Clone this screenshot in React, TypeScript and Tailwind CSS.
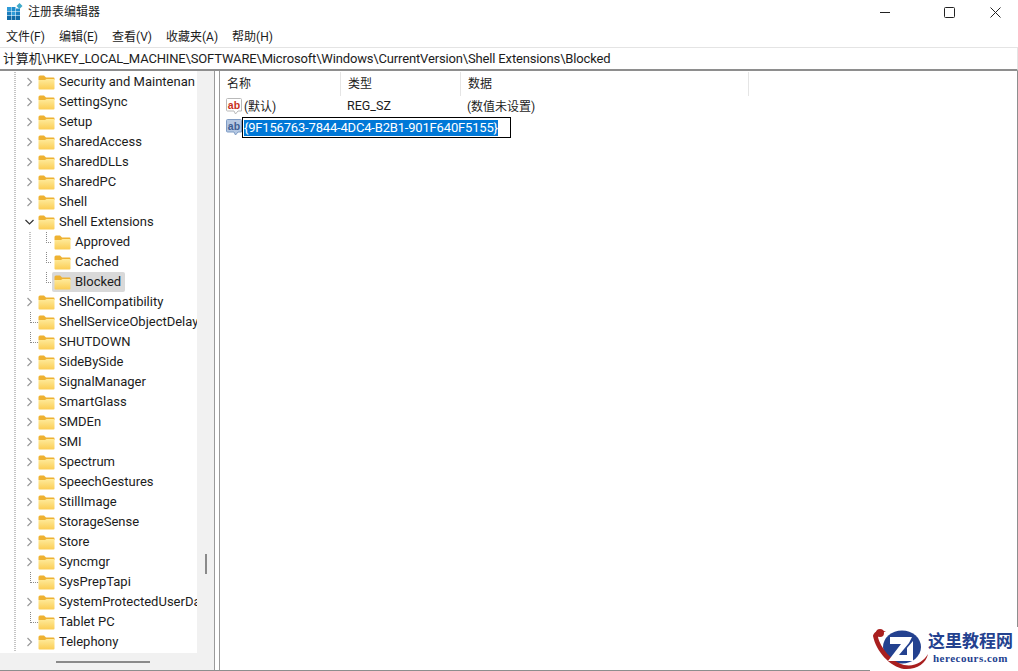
const rows = [
  { name: 'Security and Maintenan', kids: true },
  { name: 'SettingSync', kids: true },
  { name: 'Setup', kids: true },
  { name: 'SharedAccess', kids: true },
  { name: 'SharedDLLs', kids: true },
  { name: 'SharedPC', kids: true },
  { name: 'Shell', kids: true },
  { name: 'Shell Extensions', kids: true, open: true },
  { name: 'Approved', child: true },
  { name: 'Cached', child: true },
  { name: 'Blocked', child: true, selected: true },
  { name: 'ShellCompatibility', kids: true },
  { name: 'ShellServiceObjectDelay', kids: false },
  { name: 'SHUTDOWN', kids: false },
  { name: 'SideBySide', kids: true },
  { name: 'SignalManager', kids: true },
  { name: 'SmartGlass', kids: true },
  { name: 'SMDEn', kids: true },
  { name: 'SMI', kids: true },
  { name: 'Spectrum', kids: true },
  { name: 'SpeechGestures', kids: true },
  { name: 'StillImage', kids: true },
  { name: 'StorageSense', kids: true },
  { name: 'Store', kids: true },
  { name: 'Syncmgr', kids: true },
  { name: 'SysPrepTapi', kids: false },
  { name: 'SystemProtectedUserDa', kids: true },
  { name: 'Tablet PC', kids: false },
  { name: 'Telephony', kids: true },
]

const menus = ['文件(F)', '编辑(E)', '查看(V)', '收藏夹(A)', '帮助(H)']
const columns = [
  { label: '名称', width: 'w-[121px]' },
  { label: '类型', width: 'w-[120px]' },
  { label: '数据', width: 'w-[288px]' },
]

function AppIcon() {
  return (
    <svg width="16" height="17" viewBox="0 0 16 17" className="shrink-0">
      <rect x="0" y="4" width="4" height="4" fill="#2f9bd8" />
      <rect x="4.5" y="4" width="4" height="4" fill="#1f8ccb" />
      <rect x="9" y="5.5" width="4" height="2.5" fill="#1f8ccb" />
      <rect x="0" y="8.5" width="4" height="4" fill="#1a7fbf" />
      <rect x="4.5" y="8.5" width="4" height="4" fill="#2f9bd8" />
      <rect x="9" y="8.5" width="4" height="4" fill="#1a7fbf" />
      <rect x="0" y="13" width="4" height="4" fill="#0f6aa6" />
      <rect x="4.5" y="13" width="4" height="4" fill="#0f6aa6" />
      <rect x="9" y="13" width="4" height="4" fill="#0f6aa6" />
      <path d="M12.5 0 L15.5 3 L12.5 6 L9.5 3 Z" fill="#3fa9c9" />
    </svg>
  )
}

function Folder() {
  return (
    <svg width="17" height="15" viewBox="0 0 17 15" className="shrink-0">
      <defs>
        <linearGradient id="folderFill" x1="0" y1="0" x2="0" y2="1">
          <stop offset="0" stopColor="#ffeb9c" />
          <stop offset="1" stopColor="#fbcd55" />
        </linearGradient>
      </defs>
      <path d="M0.5 2 Q0.5 0.5 2 0.5 H6 L8 2.5 H15.5 Q16.5 2.5 16.5 3.5 V5 H0.5 Z" fill="#eeb232" />
      <path d="M0.5 5 L7 5 L8.5 4 H15.5 Q16.5 4 16.5 5 V13.5 Q16.5 14.5 15.5 14.5 H1.5 Q0.5 14.5 0.5 13.5 Z" fill="url(#folderFill)" />
    </svg>
  )
}

function Guides({ kids, open, child }: { kids?: boolean; open?: boolean; child?: boolean }) {
  const w = child ? 52 : 38
  return (
    <svg width={w} height="20" viewBox={`0 0 ${w} 20`} className="shrink-0">
      <line x1="15" y1="0" x2="15" y2="20" stroke="#8a8a8a" strokeDasharray="1 1" />
      {child ? (
        <>
          <line x1="30" y1="0" x2="30" y2="20" stroke="#8a8a8a" strokeDasharray="1 1" />
          <line x1="46.5" y1="0" x2="46.5" y2="10" stroke="#8a8a8a" strokeDasharray="1 1" />
          <line x1="46" y1="10.5" x2="52" y2="10.5" stroke="#8a8a8a" strokeDasharray="1 1" />
        </>
      ) : kids ? (
        open ? (
          <path d="M25.5 8 L29.5 12 L33.5 8" fill="none" stroke="#333" strokeWidth="1.2" />
        ) : (
          <path d="M27.5 6 L31.5 10 L27.5 14" fill="none" stroke="#9a9a9a" strokeWidth="1.2" />
        )
      ) : (
        <>
          <line x1="30.5" y1="0" x2="30.5" y2="11" stroke="#8a8a8a" strokeDasharray="1 1" />
          <line x1="31" y1="10.5" x2="38" y2="10.5" stroke="#8a8a8a" strokeDasharray="1 1" />
        </>
      )}
    </svg>
  )
}

function ValueIcon({ dim }: { dim?: boolean }) {
  return (
    <svg width="16" height="17" viewBox="0 0 16 17" className="shrink-0">
      <path
        d="M0.5 1.5 Q0.5 0.5 1.5 0.5 H14.5 Q15.5 0.5 15.5 1.5 V13 L12 13 L9.5 16 L8 13 H1.5 Q0.5 13 0.5 12 Z"
        fill={dim ? '#b4c7e2' : '#fff'}
        stroke={dim ? '#7f9cc5' : '#b9b9b9'}
      />
      <text
        x="8"
        y="10.5"
        textAnchor="middle"
        fontSize="10.5"
        fontWeight="700"
        fontFamily="Liberation Sans"
        fill={dim ? '#3f5f95' : '#c8321e'}
      >
        ab
      </text>
    </svg>
  )
}

function Logo() {
  return (
    <svg width="60" height="43" viewBox="0 0 60 43" className="-mr-[2px] shrink-0">
      <ellipse cx="32" cy="20" rx="19" ry="16.5" fill="#23418f" />
      <path d="M3 9 C4 4 10 2 16 5 C12 5 8 7 8 10 C10 20 22 35 34 38 C45 40 53 35 58 27 C56 37 46 43 34 42 C20 40 6 24 3 9 Z" fill="#a81f1f" />
      <circle cx="10" cy="6" r="4" fill="#a81f1f" />
      <path d="M20 10 H42 L39 16 L29 28 H37 V21 L43 14 V34 H18 L31 17 H20 Z" fill="#fff" />
    </svg>
  )
}

export default function App() {
  return (
    <div className="relative flex h-[671px] w-[1018px] flex-col overflow-hidden bg-white font-['Roboto','Noto_Sans_CJK_SC',sans-serif] text-[13px] text-[#1c1c1c]">
      <div className="flex h-[27px] shrink-0 items-start">
        <div className="flex items-center gap-[5px] pl-[7px] pt-[3px]">
          <AppIcon />
          <span className="text-[12px] leading-[16px]">注册表编辑器</span>
        </div>
        <div className="ml-auto flex items-center">
          <div className="flex h-[24px] w-[46px] items-center justify-center">
            <svg width="46" height="22" viewBox="0 0 46 22"><line x1="0" y1="11.5" x2="10" y2="11.5" stroke="#222" /></svg>
          </div>
          <div className="flex h-[24px] w-[46px] items-center justify-center">
            <svg width="11" height="11" viewBox="0 0 11 11"><rect x="0.5" y="0.5" width="10" height="10" rx="1" fill="none" stroke="#222" /></svg>
          </div>
          <div className="flex h-[24px] w-[46px] items-center justify-center">
            <svg width="11" height="11" viewBox="0 0 11 11"><path d="M0.5 0.5 L10.5 10.5 M10.5 0.5 L0.5 10.5" fill="none" stroke="#222" /></svg>
          </div>
        </div>
      </div>

      <div className="flex h-[20px] shrink-0 items-center gap-[14px] pl-[6px] text-[12px]">
        {menus.map((m) => (
          <span key={m}>{m}</span>
        ))}
      </div>

      <div className="flex h-[24px] shrink-0 items-center border-t border-r border-[#e4e4e4] border-b-[2px] border-b-[#8e8e8e] pl-[3px] text-[13px] tracking-[-0.155px]">
        计算机\HKEY_LOCAL_MACHINE\SOFTWARE\Microsoft\Windows\CurrentVersion\Shell Extensions\Blocked
      </div>

      <div className="flex min-h-0 flex-1 border-r border-b border-[#8e8e8e]">
        <div className="flex w-[215px] shrink-0 flex-col border-r border-[#9a9a9a]">
          <div className="flex min-h-0 flex-1">
            <div className="min-w-0 flex-1 overflow-hidden pt-[1px]">
              {rows.map((r) => (
                <div key={r.name} className="flex h-[20px] items-center whitespace-nowrap">
                  <Guides kids={r.kids} open={r.open} child={r.child} />
                  <div className={`flex h-[20px] items-center gap-[4px] pr-[4px] ${r.child ? 'pl-[2px]' : ''} ${r.selected ? 'rounded-[2px] bg-[#d9d9d9]' : ''}`}>
                    <Folder />
                    <span className="leading-[20px]">{r.name}</span>
                  </div>
                </div>
              ))}
            </div>
            <div className="flex w-[17px] shrink-0 justify-center bg-[#f1f1f1] pt-[483px]">
              <div className="h-[20px] w-[2px] bg-[#8a8a8a]" />
            </div>
          </div>
          <div className="flex h-[17px] shrink-0 items-center bg-[#f1f1f1] pl-[56px]">
            <div className="h-[2px] w-[94px] bg-[#8a8a8a]" />
          </div>
        </div>

        <div className="w-[5px] shrink-0 border-r border-[#9a9a9a] bg-white" />

        <div className="min-w-0 flex-1 pt-[1px]">
          <div className="flex h-[24px] items-center">
            {columns.map((c) => (
              <div key={c.label} className={`flex h-[24px] items-center border-r border-[#e5e5e5] pl-[7px] text-[12px] ${c.width}`}>
                {c.label}
              </div>
            ))}
          </div>
          <div className="flex h-[21px] items-center pl-[6px] text-[12px]">
            <ValueIcon />
            <span className="ml-[2px] w-[103px]">(默认)</span>
            <span className="w-[120px] text-[12.5px]">REG_SZ</span>
            <span>(数值未设置)</span>
          </div>
          <div className="flex h-[21px] items-center pl-[6px]">
            <ValueIcon dim />
            <div className="flex h-[21px] w-[269px] items-center border border-black bg-white pl-[1px] text-[13px]">
              <span className="bg-[#0078d7] leading-[16px] tracking-[-0.18px] text-white">{'{9F156763-7844-4DC4-B2B1-901F640F5155}'}</span>
            </div>
          </div>
        </div>
      </div>

      <div className="absolute right-0 bottom-0 flex h-[44px] w-[148px] items-start bg-white">
        <Logo />
        <div className="flex flex-col items-center whitespace-nowrap pt-[4px]">
          <span className="text-[17px] leading-[20px] font-bold text-[#23418f]">这里教程网</span>
          <span className="font-['Liberation_Serif',serif] text-[11px] leading-[14px] font-bold tracking-[0.5px] text-[#23418f]">herecours.com</span>
        </div>
      </div>
    </div>
  )
}
